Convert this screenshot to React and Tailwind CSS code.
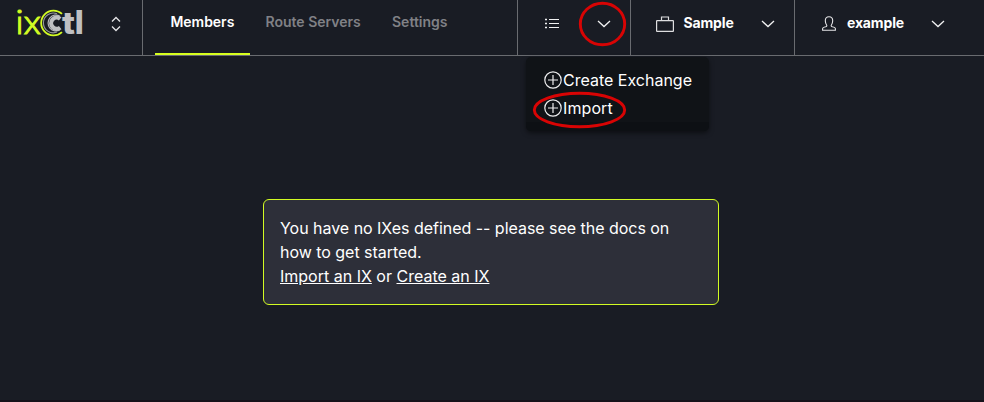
import React from "react";

function Logo() {
  return (
    <svg width="70" height="34" viewBox="15 6 70 34" className="block overflow-visible" aria-label="ixCtl">
      <text x="15.6" y="34" fontSize="33" fontWeight="300" textLength="25" lengthAdjust="spacingAndGlyphs" fill="#d2fb23" stroke="#d2fb23" strokeWidth="1.1" fontFamily="Lato, sans-serif">ix</text>
      <g fill="none">
        <path d="M62 13.9A12.4 12.4 0 1 0 62 32.1" stroke="#d2fb23" strokeWidth="1.8" />
        <path d="M57 13.7A9.9 9.9 0 1 0 57 32.1" stroke="#96979c" strokeWidth="1.1" />
        <path d="M60 16.2A7.9 7.9 0 1 0 60 29.8" stroke="#b4b5b9" strokeWidth="1.2" />
        <path d="M60.2 18.8A5.6 5.6 0 1 0 60.2 27.6" stroke="#bfc0c3" strokeWidth="4.2" />
      </g>
      <text x="62" y="34" fontSize="31" fontWeight="800" textLength="13" lengthAdjust="spacingAndGlyphs" fill="#bfc0c3" fontFamily="Inter, sans-serif">t</text>
      <text x="74.8" y="34" fontSize="32" fontWeight="800" fill="#bfc0c3" textLength="9" lengthAdjust="spacingAndGlyphs" fontFamily="Inter, sans-serif">l</text>
    </svg>
  );
}

function Chevron() {
  return (
    <svg width="14" height="8" viewBox="0 0 14 8" className="block" fill="none" stroke="#f1f1f2" strokeWidth="1.3">
      <path d="M1 1l6 5.5L13 1" />
    </svg>
  );
}

function Plus() {
  return (
    <svg width="18" height="18" viewBox="0 0 18 18" className="block shrink-0" fill="none" stroke="#eeeeef" strokeWidth="1.2">
      <circle cx="9" cy="9" r="8.2" />
      <path d="M9 4v10M4 9h10" />
    </svg>
  );
}

function ExchangeMenu() {
  return (
    <div className="absolute left-[8px] top-[57px] h-[74px] w-[183px] rounded-[5px] bg-[#101317] pl-[18px] pt-[9px] text-[16px] leading-7 text-white shadow-[0_2px_5px_rgba(0,0,0,0.5)]">
      <div className="flex h-7 items-center"><Plus /><span className="whitespace-nowrap pl-px">Create Exchange</span></div>
      <div className="flex h-7 items-center"><Plus /><span className="pl-px tracking-[0.1px]">Import</span></div>
      <div className="-ml-[18px] h-[9px] rounded-b-[5px] bg-[#0d1014]" />
    </div>
  );
}

export default function App() {
  return (
    <div className="relative flex h-[402px] w-[984px] flex-col overflow-hidden border-b-2 border-[#15121a] bg-[#191c24] font-['Inter',sans-serif] text-white">
      <header className="flex h-14 shrink-0 border-b border-[#696b70]">
        <div className="flex w-[143px] shrink-0 border-r border-[#696b70] pl-[15px] pt-[6px]">
          <Logo />
          <svg width="10" height="16" viewBox="0 0 10 16" className="ml-[26px] mt-[10px] block" fill="none" stroke="#e5e5e7" strokeWidth="1.3">
            <path d="M1 5.5l4-4 4 4M1 10.5l4 4 4-4" />
          </svg>
        </div>
        <nav className="flex w-[375px] shrink-0 border-r border-[#696b70] pl-3 text-[14px] font-semibold leading-[44px] text-[#808186]">
          <a className="h-[55px] w-[95px] border-b-2 border-[#d7ff1f] pl-[15.5px] tracking-[-0.04px] text-white">Members</a>
          <a className="w-[126px] whitespace-nowrap pl-[15.5px]">Route Servers</a>
          <a className="pl-[16px]">Settings</a>
        </nav>
        <div className="relative flex w-[113px] shrink-0 border-r border-[#696b70] pl-[26px]">
          <svg width="16" height="12" viewBox="0 0 16 12" className="mt-[18px] block" fill="none" stroke="#f1f1f2" strokeWidth="1.1">
            <path d="M5 1.5h10M5 5.5h10M5 9.5h10" />
            <path d="M1 1.5h2M1 5.5h2M1 9.5h2" strokeWidth="1.6" />
          </svg>
          <div className="ml-[37px] mt-[20px]"><Chevron /></div>
          <ExchangeMenu />
        </div>
        <div className="flex w-[164px] shrink-0 border-r border-[#696b70] pl-[25px] text-[14px] font-bold">
          <svg width="18" height="16" viewBox="0 0 18 16" className="mt-[16px] block" fill="none" stroke="#dedee0" strokeWidth="1.2">
            <rect x="0.6" y="4.6" width="16.8" height="10.8" rx="0.5" />
            <path d="M5.5 4.5V1h7v3.5" />
          </svg>
          <span className="w-[87px] pl-[9.5px] leading-[46px] tracking-[-0.15px]">Sample</span>
          <div className="mt-[20px]"><Chevron /></div>
        </div>
        <div className="flex pl-[27px] text-[14px] font-bold">
          <svg width="14" height="15" viewBox="0 0 14 15" className="mt-[16px] block" fill="none" stroke="#e5e5e7" strokeWidth="1.1">
            <path d="M.6 14.2v-1.7c0-.8 1-1.2 3-1.7 1-.3 1.5-.7 1.1-1.6C3.8 7.8 3.3 6.5 3.3 4.7 3.3 2.2 4.8.7 7 .7s3.7 1.5 3.7 4c0 1.8-.5 3.1-1.4 4.5-.4.9.1 1.3 1.1 1.6 2 .5 3 .9 3 1.7v1.7z" />
          </svg>
          <span className="w-[95px] pl-[11px] leading-[46px] tracking-[-0.15px]">example</span>
          <div className="mt-[20px]"><Chevron /></div>
        </div>
      </header>
      <main className="flex justify-center pr-[2px] pt-[143px]">
        <div className="h-[106px] w-[456px] rounded-[6px] border border-[#d2fb23] bg-[#2d2f39] px-4 py-4 text-[16px] leading-6">
          <p className="whitespace-nowrap tracking-[-0.03px]">You have no IXes defined -- please see the docs on<br />how to get started.</p>
          <p><a className="underline">Import an IX</a> or <a className="underline">Create an IX</a></p>
        </div>
      </main>
      <svg width="110" height="132" viewBox="530 0 110 132" className="pointer-events-none absolute left-[530px] top-0" fill="none" stroke="#d80404" strokeWidth="2.9">
        <ellipse cx="602.5" cy="24" rx="22.2" ry="20.8" />
        <ellipse cx="579.5" cy="110" rx="45.2" ry="16.8" />
      </svg>
    </div>
  );
}
